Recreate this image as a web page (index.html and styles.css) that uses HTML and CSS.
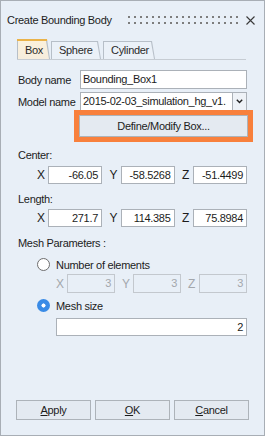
FILE: index.html
```html
<!DOCTYPE html>
<html>
<head>
<meta charset="utf-8">
<link rel="stylesheet" href="styles.css">
</head>
<body>
<div class="window">
  <div class="titlebar">
    <span class="title">Create Bounding Body</span>
    <span class="grip"></span>
    <svg class="close" width="9" height="9" viewBox="0 0 9 9"><path d="M0.5 0.5L8.5 8.5M8.5 0.5L0.5 8.5" stroke="#3a3a3a" stroke-width="1.1" fill="none"/></svg>
  </div>
  <div class="tabs">
    <div class="tab tab-active tab-box"><span class="tab-face">Box</span></div>
    <div class="tab tab-sphere"><span class="tab-face">Sphere</span></div>
    <div class="tab tab-cyl"><span class="tab-face">Cylinder</span></div>
  </div>
  <div class="panel">
    <div class="field first">
      <span class="field-label">Body name</span>
      <div class="input wide">Bounding_Box1</div>
    </div>
    <div class="field second">
      <span class="field-label">Model name</span>
      <div class="combo">
        <div class="combo-text">2015-02-03_simulation_hg_v1.</div>
        <div class="combo-btn"><svg width="7" height="5" viewBox="0 0 7 5"><path d="M0.8 0.8L3.5 3.6L6.2 0.8" stroke="#222" stroke-width="1.4" fill="none"/></svg></div>
      </div>
    </div>
    <div class="highlight"><div class="btn define">Define/Modify Box...</div></div>

    <div class="section s-center">Center:</div>
    <div class="xyz r-center">
      <div class="grp"><span class="ax">X</span><div class="input num">-66.05</div></div>
      <div class="grp"><span class="ax">Y</span><div class="input num">-58.5268</div></div>
      <div class="grp"><span class="ax">Z</span><div class="input num">-51.4499</div></div>
    </div>

    <div class="section s-length">Length:</div>
    <div class="xyz r-length">
      <div class="grp"><span class="ax">X</span><div class="input num">271.7</div></div>
      <div class="grp"><span class="ax">Y</span><div class="input num">114.385</div></div>
      <div class="grp"><span class="ax">Z</span><div class="input num">75.8984</div></div>
    </div>

    <div class="section s-mesh">Mesh Parameters :</div>
    <div class="radio-row r1"><span class="radio"></span><span>Number of elements</span></div>
    <div class="xyz disabled">
      <div class="grp"><span class="ax">X</span><div class="input num small">3</div></div>
      <div class="grp"><span class="ax">Y</span><div class="input num small">3</div></div>
      <div class="grp"><span class="ax">Z</span><div class="input num small">3</div></div>
    </div>
    <div class="radio-row r2"><span class="radio checked"></span><span>Mesh size</span></div>
    <div class="input num meshsize">2</div>
  </div>
  <div class="actions">
    <div class="btn action"><u>A</u>pply</div>
    <div class="btn action"><u>O</u>K</div>
    <div class="btn action"><u>C</u>ancel</div>
  </div>
</div>
</body>
</html>
```

FILE: styles.css
```css
html, body {
  margin: 0;
  padding: 0;
}
body {
  width: 265px;
  height: 436px;
  font-family: "Liberation Sans", Arial, sans-serif;
  font-size: 11px;
  letter-spacing: -0.3px;
  color: #1c1c1c;
}
.window {
  box-sizing: border-box;
  width: 265px;
  height: 436px;
  border: 1px solid #a8aeb5;
  background: #e8eff7;
  display: flex;
  flex-direction: column;
}
.titlebar {
  height: 37px;
  display: flex;
  align-items: center;
  padding: 0 9px 0 6px;
}
.title {
  flex: 1;
  white-space: nowrap;
}
.grip {
  width: 110px;
  height: 8px;
  margin-right: 8px;
  margin-top: 1px;
  background-image: linear-gradient(90deg, #7d7d7d 2px, transparent 2px), linear-gradient(90deg, #7d7d7d 2px, transparent 2px);
  background-size: 6px 2px, 6px 2px;
  background-position: 0 0, 0 6px;
  background-repeat: repeat-x;
}
.close {
  display: block;
  margin-top: 1px;
}
.tabs {
  display: flex;
  align-items: flex-end;
  height: 21px;
  margin: 0 18px 0 16px;
  border-bottom: 1px solid #c6ccd3;
}
.tab {
  box-sizing: border-box;
  height: 18px;
  background: #b7bfc8;
  clip-path: polygon(0 0, calc(100% - 3px) 0, 100% 100%, 0 100%);
  display: flex;
  margin-right: 1px;
}
.tab-face {
  flex: 1;
  margin: 1px 0 0 1px;
  background: #ebf1f8;
  clip-path: polygon(0 0, calc(100% - 4px) 0, calc(100% - 1px) 100%, 0 100%);
  line-height: 17px;
  padding-left: 7px;
  color: #2a2a2a;
}
.tab-active {
  height: 20px;
  background: linear-gradient(#eab34a 0 2px, #b7bfc8 2px);
}
.tab-active .tab-face {
  margin-top: 2px;
  background: linear-gradient(#fbf1dc, #f6eddd);
  line-height: 18px;
}
.tab-box { width: 33px; }
.tab-sphere { width: 50px; }
.tab-cyl { width: 52px; margin-left: 1px; }

.panel {
  padding: 0 17px;
  display: flex;
  flex-direction: column;
}
.field {
  display: flex;
  align-items: center;
  height: 19px;
}
.field.first { margin-top: 10px; }
.field.second { margin-top: 3px; }
.field-label {
  width: 62px;
  white-space: nowrap;
}
.input {
  box-sizing: border-box;
  height: 18px;
  border: 1px solid #abb1b8;
  background: #ffffff;
  padding: 0 2px;
  line-height: 16px;
  white-space: nowrap;
  overflow: hidden;
}
.input.wide {
  width: 167px;
  height: 19px;
  line-height: 17px;
}
.combo {
  display: flex;
  height: 19px;
}
.combo-text {
  box-sizing: border-box;
  width: 153px;
  border: 1px solid #abb1b8;
  background: #fff;
  padding: 0 2px;
  line-height: 17px;
  white-space: nowrap;
  overflow: hidden;
}
.combo-btn {
  box-sizing: border-box;
  width: 14px;
  border: 1px solid #abb1b8;
  border-left: none;
  background: #eef2f7;
  display: flex;
  align-items: center;
  justify-content: center;
}
.combo-btn svg { display: block; }
.highlight {
  box-sizing: border-box;
  width: 179px;
  height: 32px;
  margin: -1px 0 0 56px;
  border: 5px solid #f8803c;
}
.btn {
  box-sizing: border-box;
  border: 1px solid #adb3b9;
  background: #e4eaf1;
  text-align: center;
  color: #1c1c1c;
}
.define {
  height: 22px;
  line-height: 20px;
}
.section {
  line-height: 15px;
  height: 15px;
}
.s-center { margin-top: 6px; }
.s-length { margin-top: 8px; }
.s-mesh { margin-top: 9px; }
.xyz {
  display: flex;
  justify-content: space-between;
  margin-left: 19px;
  width: 210px;
}
.r-center { margin-top: 3px; }
.r-length { margin-top: 2px; }
.grp {
  display: flex;
  align-items: center;
}
.ax {
  width: 11px;
  font-size: 12px;
}
.num {
  width: 54px;
  text-align: right;
  padding-right: 3px;
}
.disabled {
  margin-left: 38px;
  width: 191px;
  margin-top: 2px;
  color: #a3a7ac;
}
.disabled .input {
  background: transparent;
  border-color: #c3c8ce;
  width: 48px;
  height: 19px;
  line-height: 17px;
}
.radio-row {
  display: flex;
  align-items: center;
  height: 15px;
  margin-left: 19px;
  gap: 6px;
}
.r1 { margin-top: 6px; }
.r2 { margin-top: 5px; }
.radio {
  box-sizing: border-box;
  width: 13px;
  height: 13px;
  border-radius: 50%;
  border: 1px solid #6e6e6e;
  background: #fff;
}
.radio.checked {
  border: none;
  background: radial-gradient(circle, #ffffff 0 1.8px, #3a8be6 2.3px);
}
.meshsize {
  margin: 5px 0 0 38px;
  width: 191px;
}
.actions {
  margin-top: auto;
  padding: 0 0 15px 15px;
  display: flex;
  gap: 4px;
}
.action {
  width: 75px;
  height: 20px;
  line-height: 18px;
}
.action u {
  text-underline-offset: 1px;
}
```
